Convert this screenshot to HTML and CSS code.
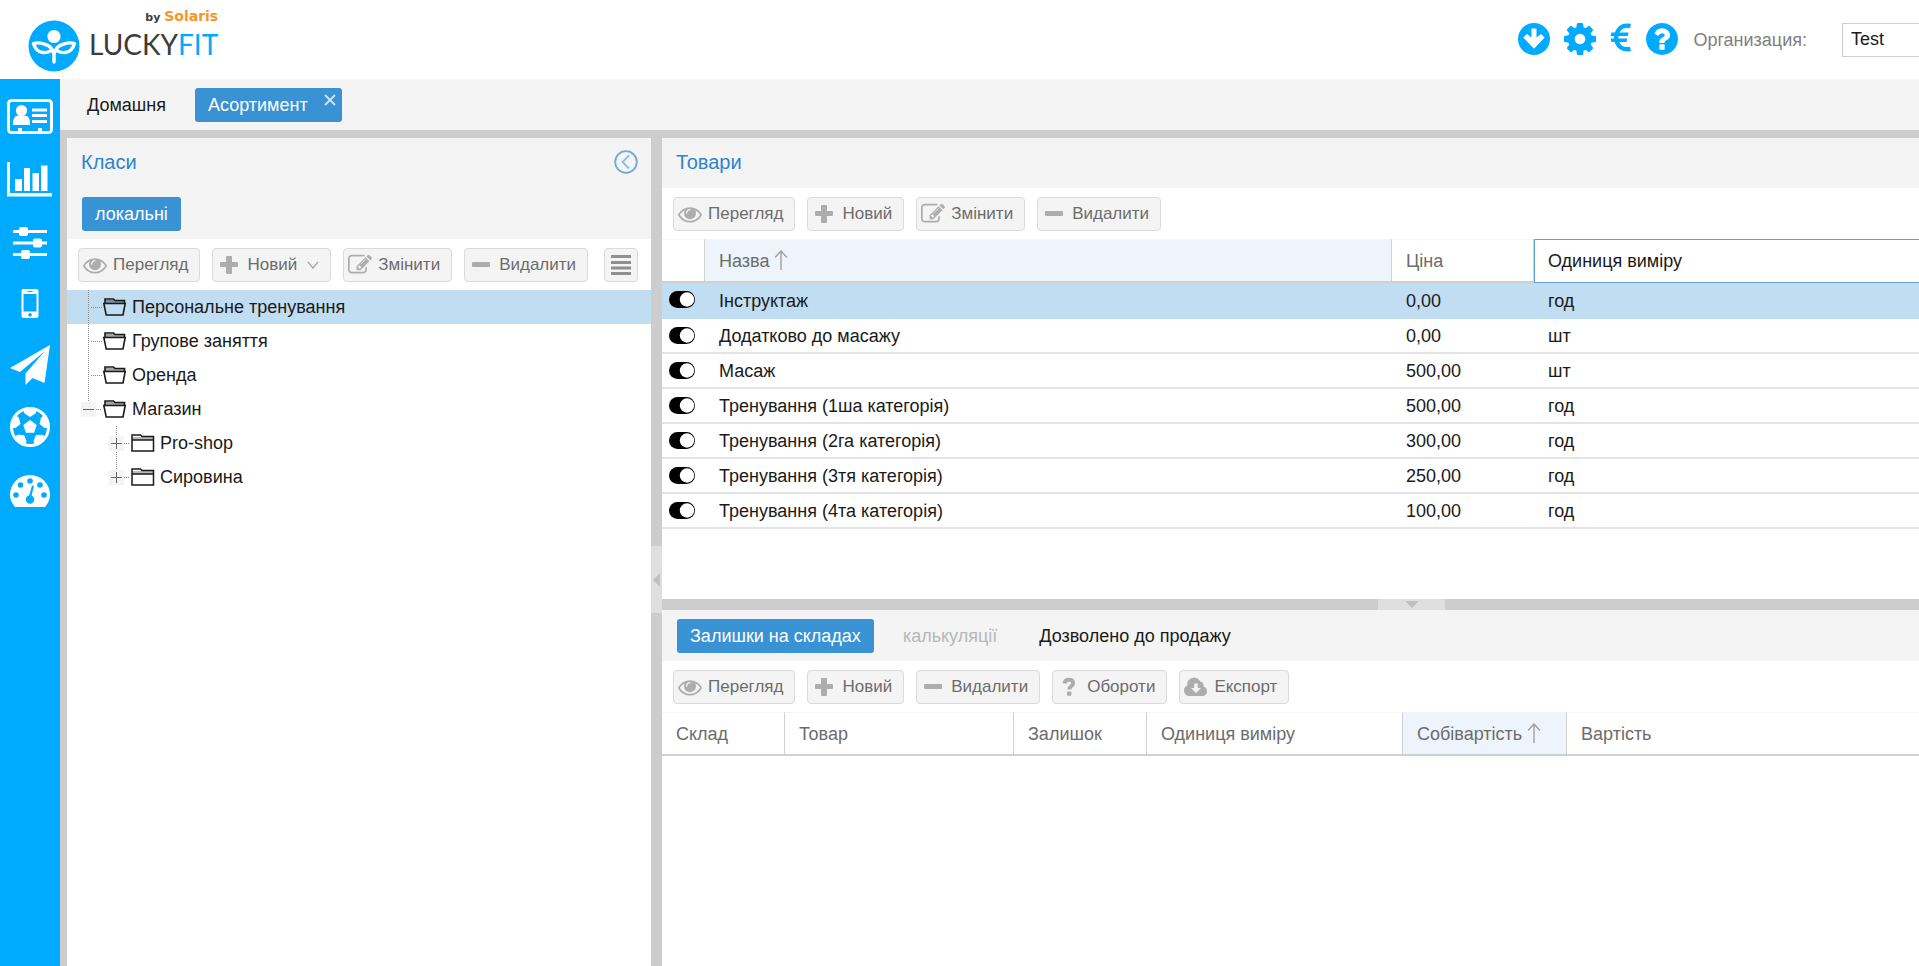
FILE: index.html
```html
<!DOCTYPE html>
<html lang="uk">
<head>
<meta charset="utf-8">
<title>LuckyFit</title>
<link rel="stylesheet" href="styles.css">
</head>
<body>
<svg class="defs" aria-hidden="true">
  <symbol id="eye" viewBox="0 0 1792 1792"><path d="M1664 960q-152-236-381-353 61 104 61 225 0 185-131.500 316.500t-316.500 131.500-316.500-131.500-131.500-316.500q0-121 61-225-229 117-381 353 133 205 333.500 326.500t434.500 121.500 434.500-121.500 333.500-326.500zm-720-384q0-20-14-34t-34-14q-125 0-214.500 89.500t-89.500 214.500q0 20 14 34t34 14 34-14 14-34q0-86 61-147t147-61q20 0 34-14t14-34zm848 384q0 34-20 69-140 230-376.500 368.500t-499.500 138.500-499.500-139-376.500-368q-20-35-20-69t20-69q140-229 376.500-368t499.500-139 499.500 139 376.500 368q20 35 20 69z"/></symbol>
  <symbol id="plus" viewBox="0 0 24 24"><path d="M10 3h4a1 1 0 0 1 1 1v5h5a1 1 0 0 1 1 1v3a1 1 0 0 1-1 1h-5v6a1 1 0 0 1-1 1h-4a1 1 0 0 1-1-1v-6H4a1 1 0 0 1-1-1v-3a1 1 0 0 1 1-1h5V4a1 1 0 0 1 1-1z"/></symbol>
  <symbol id="minus" viewBox="0 0 24 24"><rect x="3" y="9" width="18" height="5" rx="1"/></symbol>
  <symbol id="edit" viewBox="0 0 1792 1792"><path d="M888 1184l116-116-152-152-116 116v56h96v96h56zm440-720q-16-16-33 1l-350 350q-17 17-1 33t33-1l350-350q17-17 1-33zm80 594v190q0 119-84.500 203.500t-203.500 84.500h-832q-119 0-203.500-84.500t-84.500-203.500v-832q0-119 84.500-203.500t203.500-84.500h832q63 0 117 25 15 7 18 23 3 17-9 29l-49 49q-14 14-32 8-23-6-45-6h-832q-66 0-113 47t-47 113v832q0 66 47 113t113 47h832q66 0 113-47t47-113v-126q0-13 9-22l64-64q15-15 35-7t20 29zm-96-738l288 288-672 672h-288v-288zm444 132l-92 92-288-288 92-92q28-28 68-28t68 28l152 152q28 28 28 68t-28 68z"/></symbol>
  <symbol id="question" viewBox="0 0 24 24"><path d="M7.500 8.500Q8 4.800 12.200 4.800 16 4.800 16 8.200 16 10.200 14 11.400 12.300 12.500 12.300 14.600" fill="none" stroke="currentColor" stroke-width="4"/><rect x="10" y="16.500" width="4.400" height="4.200" rx="1"/></symbol>
  <symbol id="cloud" viewBox="0 0 24 24"><path fill-rule="evenodd" d="M5.500 21A5.500 5.500 0 0 1 3.300 10.500 6.800 6.800 0 0 1 16.200 6.600 4.300 4.300 0 0 1 19.600 11.500 4.900 4.900 0 0 1 19 21zM10.200 8.500v4.500H7l5 5 5-5h-3.300V8.500z"/></symbol>
  <symbol id="folder-open" viewBox="0 0 24 20"><path d="M2 6V2h8.500L12 3.500h9.500V6M.8 6.500h21.400L20 18H3.200z" fill="none" stroke="currentColor" stroke-width="1.600"/><path d="M2 3h19v3H2z" opacity=".4"/></symbol>
  <symbol id="folder" viewBox="0 0 24 20"><path d="M1 18V2h8.500L11 3.500h11.500V18zM1 7h21.500" fill="none" stroke="currentColor" stroke-width="1.500"/><path d="M1 4h21.500v3H1z" opacity=".3"/></symbol>
  <symbol id="sort" viewBox="0 0 14 20"><path d="M7 20V1M1 7.500L7 1l6 6.500" fill="none" stroke="currentColor" stroke-width="1.400"/></symbol>
  <symbol id="toggle" viewBox="0 0 26 18"><rect width="26" height="17" rx="8.500" fill="#000"/><circle cx="18" cy="8.500" r="7.200" fill="#fff"/></symbol>
  <symbol id="branch" viewBox="0 0 36 34"><path d="M21.500 0v34M24 17.500h11" class="dots"/></symbol>
  <symbol id="ball-patch" viewBox="0 0 48 48"><path d="M17 6Q24 4 31 6l-1.500 4.500L24 14l-5.500-3.500z"/></symbol>
</svg>

<header class="header">
  <a href="#" class="logo" aria-label="LuckyFit by Solaris">
    <svg class="logo-mark" viewBox="0 0 52 52"><circle cx="26" cy="26" r="25.500" fill="#00aaff"/><circle cx="26" cy="16.500" r="6.600" fill="#fff"/><path d="M26 42V35Q25 26 16 24 10 22 5.500 23.500 8 32 15 32.500 20 33 23 30.500M26 42V35Q27 26 36 24 42 22 46.500 23.500 44 32 37 32.500 32 33 29 30.500" fill="none" stroke="#fff" stroke-width="3.400" stroke-linecap="round" stroke-linejoin="round"/></svg>
    <span class="logo-text">
      <span class="logo-by">by <b>Solaris</b></span>
      <span class="logo-name">LUCKY<span>FIT</span></span>
    </span>
  </a>
  <div class="header-tools">
    <button class="tool" aria-label="Завантажити"><svg viewBox="0 0 32 32"><circle cx="16" cy="16" r="16"/><path d="M13.500 5.500h5v9l4.500-3.500 3.700 3.500L16 25.800 5.300 14.500 9 11l4.500 3.500z" fill="#fff"/></svg></button>
    <button class="tool" aria-label="Налаштування"><svg viewBox="128 128 1536 1536"><path d="M1152 896q0-106-75-181t-181-75-181 75-75 181 75 181 181 75 181-75 75-181zm512-109v222q0 12-8 23t-20 13l-185 28q-19 54-39 91 35 50 107 138 10 12 10 25t-9 23q-27 37-99 108t-94 71q-12 0-26-9l-138-108q-44 23-91 38-16 136-29 186-7 28-36 28h-222q-14 0-24.500-8.500t-11.500-21.500l-28-184q-49-16-90-37l-141 107q-10 9-25 9-14 0-25-11-126-114-165-168-7-10-7-23 0-12 8-23 15-21 51-66.500t54-70.500q-27-50-41-99l-183-27q-13-2-21-12.500t-8-23.500v-222q0-12 8-23t19-13l186-28q14-46 39-92-40-57-107-138-10-12-10-24 0-10 9-23 26-36 98.500-107.500t94.500-71.500q13 0 26 10l138 107q44-23 91-38 16-136 29-186 7-28 36-28h222q14 0 24.500 8.500t11.500 21.500l28 184q49 16 90 37l142-107q9-9 24-9 13 0 25 10 129 119 165 170 7 8 7 22 0 12-8 23-15 21-51 66.500t-54 70.500q26 50 41 98l183 28q13 2 21 12.500t8 23.500z"/></svg></button>
    <button class="tool tool-narrow" aria-label="Валюта"><svg viewBox="0 0 22 32"><path d="M20.500 3Q8 .5 6 14.500 7.500 28 20.500 26" fill="none" stroke="currentColor" stroke-width="4.400"/><path d="M1.500 9.500h17l-.7 3.400H.5zM.5 15.500h16.700l-.7 3.400h-15z"/></svg></button>
    <button class="tool" aria-label="Допомога"><svg viewBox="128 128 1536 1536"><path d="M1024 1376v-192q0-14-9-23t-23-9h-192q-14 0-23 9t-9 23v192q0 14 9 23t23 9h192q14 0 23-9t9-23zm256-672q0-88-55.500-163t-138.500-116-170-41q-243 0-371 213-15 24 8 42l132 100q7 6 19 6 16 0 25-12 53-68 86-92 34-24 86-24 48 0 85.500 26t37.500 59q0 38-20 61t-68 45q-63 28-115.500 86.500t-52.500 125.500v36q0 14 9 23t23 9h192q14 0 23-9t9-23q0-19 21.500-49.500t54.500-49.500q32-18 49-28.500t46-35 44.500-48 28-60.500 12.500-81zm384 192q0 209-103 385.500t-279.500 279.500-385.500 103-385.500-103-279.500-279.500-103-385.500 103-385.500 279.500-279.500 385.500-103 385.500 103 279.500 279.500 103 385.500z"/></svg></button>
  </div>
  <label class="org-label" for="org">Организация:</label>
  <input class="org-input" id="org" type="text" value="Test">
</header>

<div class="body">
  <nav class="sidebar" aria-label="Розділи">
    <a href="#" aria-label="Клієнти"><svg viewBox="0 0 48 48"><rect x="2.500" y="7.500" width="43" height="32" rx="3" fill="none" stroke="#fff" stroke-width="3"/><circle cx="15.500" cy="17.500" r="5.600"/><path d="M7 32q-.5-9 5-9.500h7q5.500.5 5 9.500zM26 15.500h15v3H26zM26 21h15v3H26zM26 27h15v3H26zM12 35h4v4h-4zM32 35h4v4h-4z"/></svg></a>
    <a href="#" aria-label="Звіти"><svg viewBox="0 0 48 48"><path d="M1 7h3v31h42v3.500H1zM9 24h7v12H9zM18 13h6v23h-6zM26.500 18H33v18h-6.500zM35 10.500h6.500V36H35z"/></svg></a>
    <a href="#" aria-label="Параметри"><svg viewBox="0 0 48 48"><path d="M7 13h34v3H7zM7 24.500h34v3H7zM7 36h34v3H7z"/><rect x="13" y="10" width="9" height="9" rx="2"/><rect x="27" y="21.500" width="9" height="9" rx="2"/><rect x="15" y="33" width="9" height="9" rx="2"/></svg></a>
    <a href="#" aria-label="Мобільний застосунок"><svg viewBox="0 0 48 48"><path fill-rule="evenodd" d="M17.500 10h13a2 2 0 0 1 2 2v25a2 2 0 0 1-2 2h-13a2 2 0 0 1-2-2V12a2 2 0 0 1 2-2zM17.500 15v17.500h13V15zM24 34a1.800 1.800 0 1 0 .1 0zM21.500 12v1h5v-1z"/></svg></a>
    <a href="#" aria-label="Розсилка"><svg viewBox="0 0 48 48"><path d="M44 4L38.500 42l-12-5-7 7V32.500L39 10 14 31 4 27z"/></svg></a>
    <a href="#" aria-label="Спорт"><svg viewBox="0 0 48 48"><circle cx="24" cy="24" r="18.500" fill="none" stroke="#fff" stroke-width="3"/><path d="M24 17l6.700 4.900-2.600 7.800h-8.200l-2.600-7.800z"/><use href="#ball-patch" width="48" height="48"/><use href="#ball-patch" width="48" height="48" transform="rotate(72 24 24)"/><use href="#ball-patch" width="48" height="48" transform="rotate(144 24 24)"/><use href="#ball-patch" width="48" height="48" transform="rotate(216 24 24)"/><use href="#ball-patch" width="48" height="48" transform="rotate(288 24 24)"/></svg></a>
    <a href="#" aria-label="Показники"><svg viewBox="0 0 48 48"><path d="M9 42Q4 36 4 30a20 20 0 0 1 40 0q0 6-5 12z"/><g fill="#00aaff"><circle cx="10" cy="30" r="2.800"/><circle cx="14.500" cy="20" r="2.800"/><circle cx="24" cy="16" r="2.800"/><circle cx="34" cy="20" r="2.800"/><circle cx="38" cy="30" r="2.800"/><circle cx="24" cy="34.500" r="4.200"/><path d="M26 20.500l2 .5-3 12h-2.500z"/></g></svg></a>
  </nav>

  <main class="workspace">
    <div class="tabs">
      <button class="tab">Домашня</button>
      <button class="tab tab-active">Асортимент<svg class="close" viewBox="0 0 12 12"><path d="M1 1l10 10M11 1L1 11" fill="none" stroke="#cfe4f5" stroke-width="1.800"/></svg></button>
    </div>

    <div class="split">
      <section class="panel classes">
        <div class="panel-title"><h2>Класи</h2>
          <button class="collapse" aria-label="Згорнути"><svg viewBox="0 0 24 24"><circle cx="12" cy="12" r="10.800" fill="none" stroke="#6fa9d4" stroke-width="1.800"/><path d="M15 5.500L8.500 12l6.500 6.500" fill="none" stroke="#8dbde2" stroke-width="1.800"/></svg></button>
        </div>
        <div class="subtabs"><button class="tab tab-active">локальні</button></div>
        <div class="toolbar">
          <button class="btn"><svg><use href="#eye"/></svg>Перегляд</button>
          <button class="btn"><svg><use href="#plus"/></svg>Новий<svg class="caret" viewBox="0 0 12 8"><path d="M1 1l5 6 5-6" fill="none" stroke="currentColor" stroke-width="1.500"/></svg></button>
          <button class="btn"><svg><use href="#edit"/></svg>Змінити</button>
          <button class="btn"><svg><use href="#minus"/></svg>Видалити</button>
          <button class="btn btn-menu" aria-label="Меню"><svg viewBox="0 0 24 24"><path d="M2 2h20v3H2zM2 8h20v3H2zM2 13.500h20v3H2zM2 19h20v3H2z"/></svg></button>
        </div>
        <ul class="tree">
          <li class="selected"><svg class="lines"><use href="#branch"/></svg><svg class="folder"><use href="#folder-open"/></svg>Персональне тренування</li>
          <li><svg class="lines"><use href="#branch"/></svg><svg class="folder"><use href="#folder-open"/></svg>Групове заняття</li>
          <li><svg class="lines"><use href="#branch"/></svg><svg class="folder"><use href="#folder-open"/></svg>Оренда</li>
          <li><svg class="lines" viewBox="0 0 36 34"><path d="M21.500 0v10M29 17.500h6" class="dots"/><path d="M14 10h15v15H14z" class="box"/><path d="M16 17.500h11" class="sign"/></svg><svg class="folder"><use href="#folder-open"/></svg>Магазин</li>
          <li><svg class="lines lines-deep" viewBox="0 0 64 34"><path d="M49.500 0v34M57 17.500h6" class="dots"/><path d="M42 10h15v15H42z" class="box"/><path d="M44 17.500h11M49.500 12v11" class="sign"/></svg><svg class="folder"><use href="#folder"/></svg>Pro-shop</li>
          <li><svg class="lines lines-deep" viewBox="0 0 64 34"><path d="M49.500 0v10M57 17.500h6" class="dots"/><path d="M42 10h15v15H42z" class="box"/><path d="M44 17.500h11M49.500 12v11" class="sign"/></svg><svg class="folder"><use href="#folder"/></svg>Сировина</li>
        </ul>
      </section>

      <div class="splitter-v"><button class="grip" aria-label="Згорнути класи"><svg viewBox="0 0 7 14"><path d="M7 0v14L0 7z"/></svg></button></div>

      <div class="right">
        <section class="panel goods">
          <div class="panel-title"><h2>Товари</h2></div>
          <div class="toolbar">
            <button class="btn"><svg><use href="#eye"/></svg>Перегляд</button>
            <button class="btn"><svg><use href="#plus"/></svg>Новий</button>
            <button class="btn"><svg><use href="#edit"/></svg>Змінити</button>
            <button class="btn"><svg><use href="#minus"/></svg>Видалити</button>
          </div>
          <table class="grid">
            <colgroup><col class="w-toggle"><col class="w-name"><col class="w-price"><col></colgroup>
            <thead><tr><th></th><th class="sorted">Назва<svg class="sort"><use href="#sort"/></svg></th><th>Ціна</th><th class="focused">Одиниця виміру</th></tr></thead>
            <tbody>
              <tr class="selected"><td><svg class="toggle"><use href="#toggle"/></svg></td><td>Інструктаж</td><td>0,00</td><td>год</td></tr>
              <tr><td><svg class="toggle"><use href="#toggle"/></svg></td><td>Додатково до масажу</td><td>0,00</td><td>шт</td></tr>
              <tr><td><svg class="toggle"><use href="#toggle"/></svg></td><td>Масаж</td><td>500,00</td><td>шт</td></tr>
              <tr><td><svg class="toggle"><use href="#toggle"/></svg></td><td>Тренування (1ша категорія)</td><td>500,00</td><td>год</td></tr>
              <tr><td><svg class="toggle"><use href="#toggle"/></svg></td><td>Тренування (2га категорія)</td><td>300,00</td><td>год</td></tr>
              <tr><td><svg class="toggle"><use href="#toggle"/></svg></td><td>Тренування (3тя категорія)</td><td>250,00</td><td>год</td></tr>
              <tr><td><svg class="toggle"><use href="#toggle"/></svg></td><td>Тренування (4та категорія)</td><td>100,00</td><td>год</td></tr>
            </tbody>
          </table>
        </section>

        <div class="splitter-h"><button class="grip" aria-label="Згорнути залишки"><svg viewBox="0 0 14 7"><path d="M0 0h14L7 7z"/></svg></button></div>

        <section class="panel stock">
          <div class="tabs tabs-inner">
            <button class="tab tab-active">Залишки на складах</button>
            <button class="tab" disabled>калькуляції</button>
            <button class="tab">Дозволено до продажу</button>
          </div>
          <div class="toolbar">
            <button class="btn"><svg><use href="#eye"/></svg>Перегляд</button>
            <button class="btn"><svg><use href="#plus"/></svg>Новий</button>
            <button class="btn"><svg><use href="#minus"/></svg>Видалити</button>
            <button class="btn"><svg><use href="#question"/></svg>Обороти</button>
            <button class="btn"><svg><use href="#cloud"/></svg>Експорт</button>
          </div>
          <table class="grid">
            <colgroup><col class="w-store"><col class="w-item"><col class="w-rest"><col class="w-unit"><col class="w-cost"><col></colgroup>
            <thead><tr><th>Склад</th><th>Товар</th><th>Залишок</th><th>Одиниця виміру</th><th class="sorted">Собівартість<svg class="sort"><use href="#sort"/></svg></th><th>Вартість</th></tr></thead>
          </table>
        </section>
      </div>
    </div>
  </main>
</div>
</body>
</html>
```
FILE: styles.css
```css
* { box-sizing: border-box; }

body {
  margin: 0;
  height: 100vh;
  display: flex;
  flex-direction: column;
  overflow: hidden;
  background: #fff;
  color: #1a1a1a;
  font: 18px/24px "Liberation Sans", Arial, sans-serif;
}

button, input { font: inherit; color: inherit; }
button { border: 0; background: none; padding: 0; cursor: pointer; }
svg { display: block; flex: none; fill: currentColor; }
.defs { position: absolute; width: 0; height: 0; }

.header {
  flex: none;
  height: 79px;
  display: flex;
  align-items: center;
  padding-left: 28px;
}
.logo { display: flex; align-items: flex-end; gap: 9px; text-decoration: none; color: #3c3c3c; }
.logo-mark { width: 52px; height: 52px; }
.logo-text { display: flex; flex-direction: column; padding-bottom: 10px; }
.logo-by { align-self: flex-end; font: bold 11px/16px "DejaVu Sans", sans-serif; }
.logo-by b { color: #f7952b; font-size: 14px; }
.logo-name { font: 28px/36px Lato, sans-serif; }
.logo-name span { color: #00aaff; }

.header-tools { margin-left: auto; display: flex; gap: 14px; padding-bottom: 2px; color: #00aaff; }
.tool svg { width: 32px; height: 32px; }
.tool-narrow svg { width: 22px; }
.org-label { color: #808080; margin: 0 35px 0 15px; }
.org-input {
  width: 77px;
  height: 34px;
  border: 1px solid #cfcfcf;
  border-right: 0;
  padding: 0 8px;
}

.body { flex: 1; display: flex; min-height: 0; }

.sidebar {
  flex: none;
  width: 60px;
  padding-top: 7px;
  background: #00aaff;
  color: #fff;
}
.sidebar a { display: flex; height: 62px; align-items: center; justify-content: center; color: inherit; }
.sidebar svg { width: 48px; height: 48px; }

.workspace { flex: 1; min-width: 0; display: flex; flex-direction: column; background: #cdcdcd; }

.tabs {
  flex: none;
  height: 51px;
  display: flex;
  align-items: center;
  gap: 16px;
  padding-left: 14px;
  background: #f4f4f4;
}
.tab { position: relative; height: 34px; padding: 0 13px; border-radius: 3px; }
.tab:disabled { color: #b8b8b8; }
.tab-active { background: #3892d4; color: #fff; }
.tabs-inner { padding-left: 15px; }
.tabs:not(.tabs-inner) .tab-active { padding-right: 34px; }
.close { position: absolute; top: 6px; right: 6px; width: 12px; height: 12px; }

.split { flex: 1; min-height: 0; display: flex; padding: 8px 0 0 7px; }
.panel { background: #fff; }
.classes { flex: none; width: 584px; }
.right { flex: 1; min-width: 0; display: flex; flex-direction: column; }
.goods { flex: none; height: 461px; }
.stock { flex: 1; }

.panel-title {
  height: 50px;
  display: flex;
  align-items: center;
  justify-content: space-between;
  padding: 0 13px 2px 14px;
  background: #f4f4f4;
}
h2 { margin: 0; font-size: 20px; font-weight: 400; color: #2f84cc; }
.collapse svg { width: 24px; height: 24px; }
.subtabs { height: 51px; padding: 9px 15px 8px; background: #f4f4f4; }

.toolbar { height: 51px; display: flex; align-items: center; gap: 12px; padding-left: 11px; }
.btn {
  height: 34px;
  display: flex;
  align-items: center;
  gap: 6px;
  padding: 0 11px 0 4px;
  border: 1px solid #dadada;
  border-radius: 4px;
  background: #f4f4f4;
  color: #6c6c6c;
  font-size: 17px;
}
.btn svg { width: 24px; height: 24px; color: #adadad; }
.btn .caret { width: 12px; height: 8px; margin-left: 4px; }
.btn-menu { width: 34px; padding: 0 4px; margin-left: 4px; }
.btn-menu svg { color: #909090; }

.tree { list-style: none; margin: 0; padding: 0; }
.tree li { display: flex; align-items: center; height: 34px; }
.tree .lines { width: 36px; height: 34px; }
.tree .lines-deep { width: 64px; }
.tree .folder { width: 24px; height: 20px; margin-right: 5px; }
.dots { fill: none; stroke: #8a8a8a; stroke-dasharray: 1 1; }
.box { fill: #f4f4f4; }
.sign { fill: none; stroke: #666; }
.selected { background: #c1ddf1; }

.splitter-v { position: relative; flex: none; width: 11px; }
.splitter-h { position: relative; flex: none; height: 11px; }
.grip {
  position: absolute;
  display: flex;
  align-items: center;
  justify-content: center;
  background: #dfdfdf;
  color: #c0c0c0;
}
.splitter-v .grip { top: 408px; width: 11px; height: 67px; }
.splitter-h .grip { left: 57%; width: 67px; height: 11px; }
.splitter-v .grip svg { width: 7px; height: 14px; }
.splitter-h .grip svg { width: 14px; height: 7px; }

.grid { width: 100%; table-layout: fixed; border-collapse: separate; border-spacing: 0; }
.grid th {
  height: 44px;
  padding: 0 14px;
  text-align: left;
  font-weight: 400;
  color: #6c6c6c;
  border-top: 1px solid #f4f4f4;
  border-right: 1px solid #d0d0d0;
  border-bottom: 2px solid #d0d0d0;
}
.grid th:last-child { border-right: 0; }
.grid .sorted { background: #edf4fb; }
.grid .focused { border: 1px solid #5fa4d6; padding-left: 13px; color: #1a1a1a; }
.sort { display: inline-block; width: 14px; height: 20px; margin-left: 5px; vertical-align: -3px; color: #a0a0a0; }
.grid td { height: 35px; padding: 1px 14px 0; border-bottom: 2px solid #e4e4e4; }
.grid td:first-child { padding: 0 7px; }
.grid .selected td { height: 36px; border-color: #c1ddf1; }
.toggle { width: 26px; height: 18px; }
.w-toggle { width: 43px; }
.w-name { width: 687px; }
.w-price { width: 142px; }
.w-store { width: 123px; }
.w-item { width: 229px; }
.w-rest { width: 133px; }
.w-unit { width: 256px; }
.w-cost { width: 164px; }
```
